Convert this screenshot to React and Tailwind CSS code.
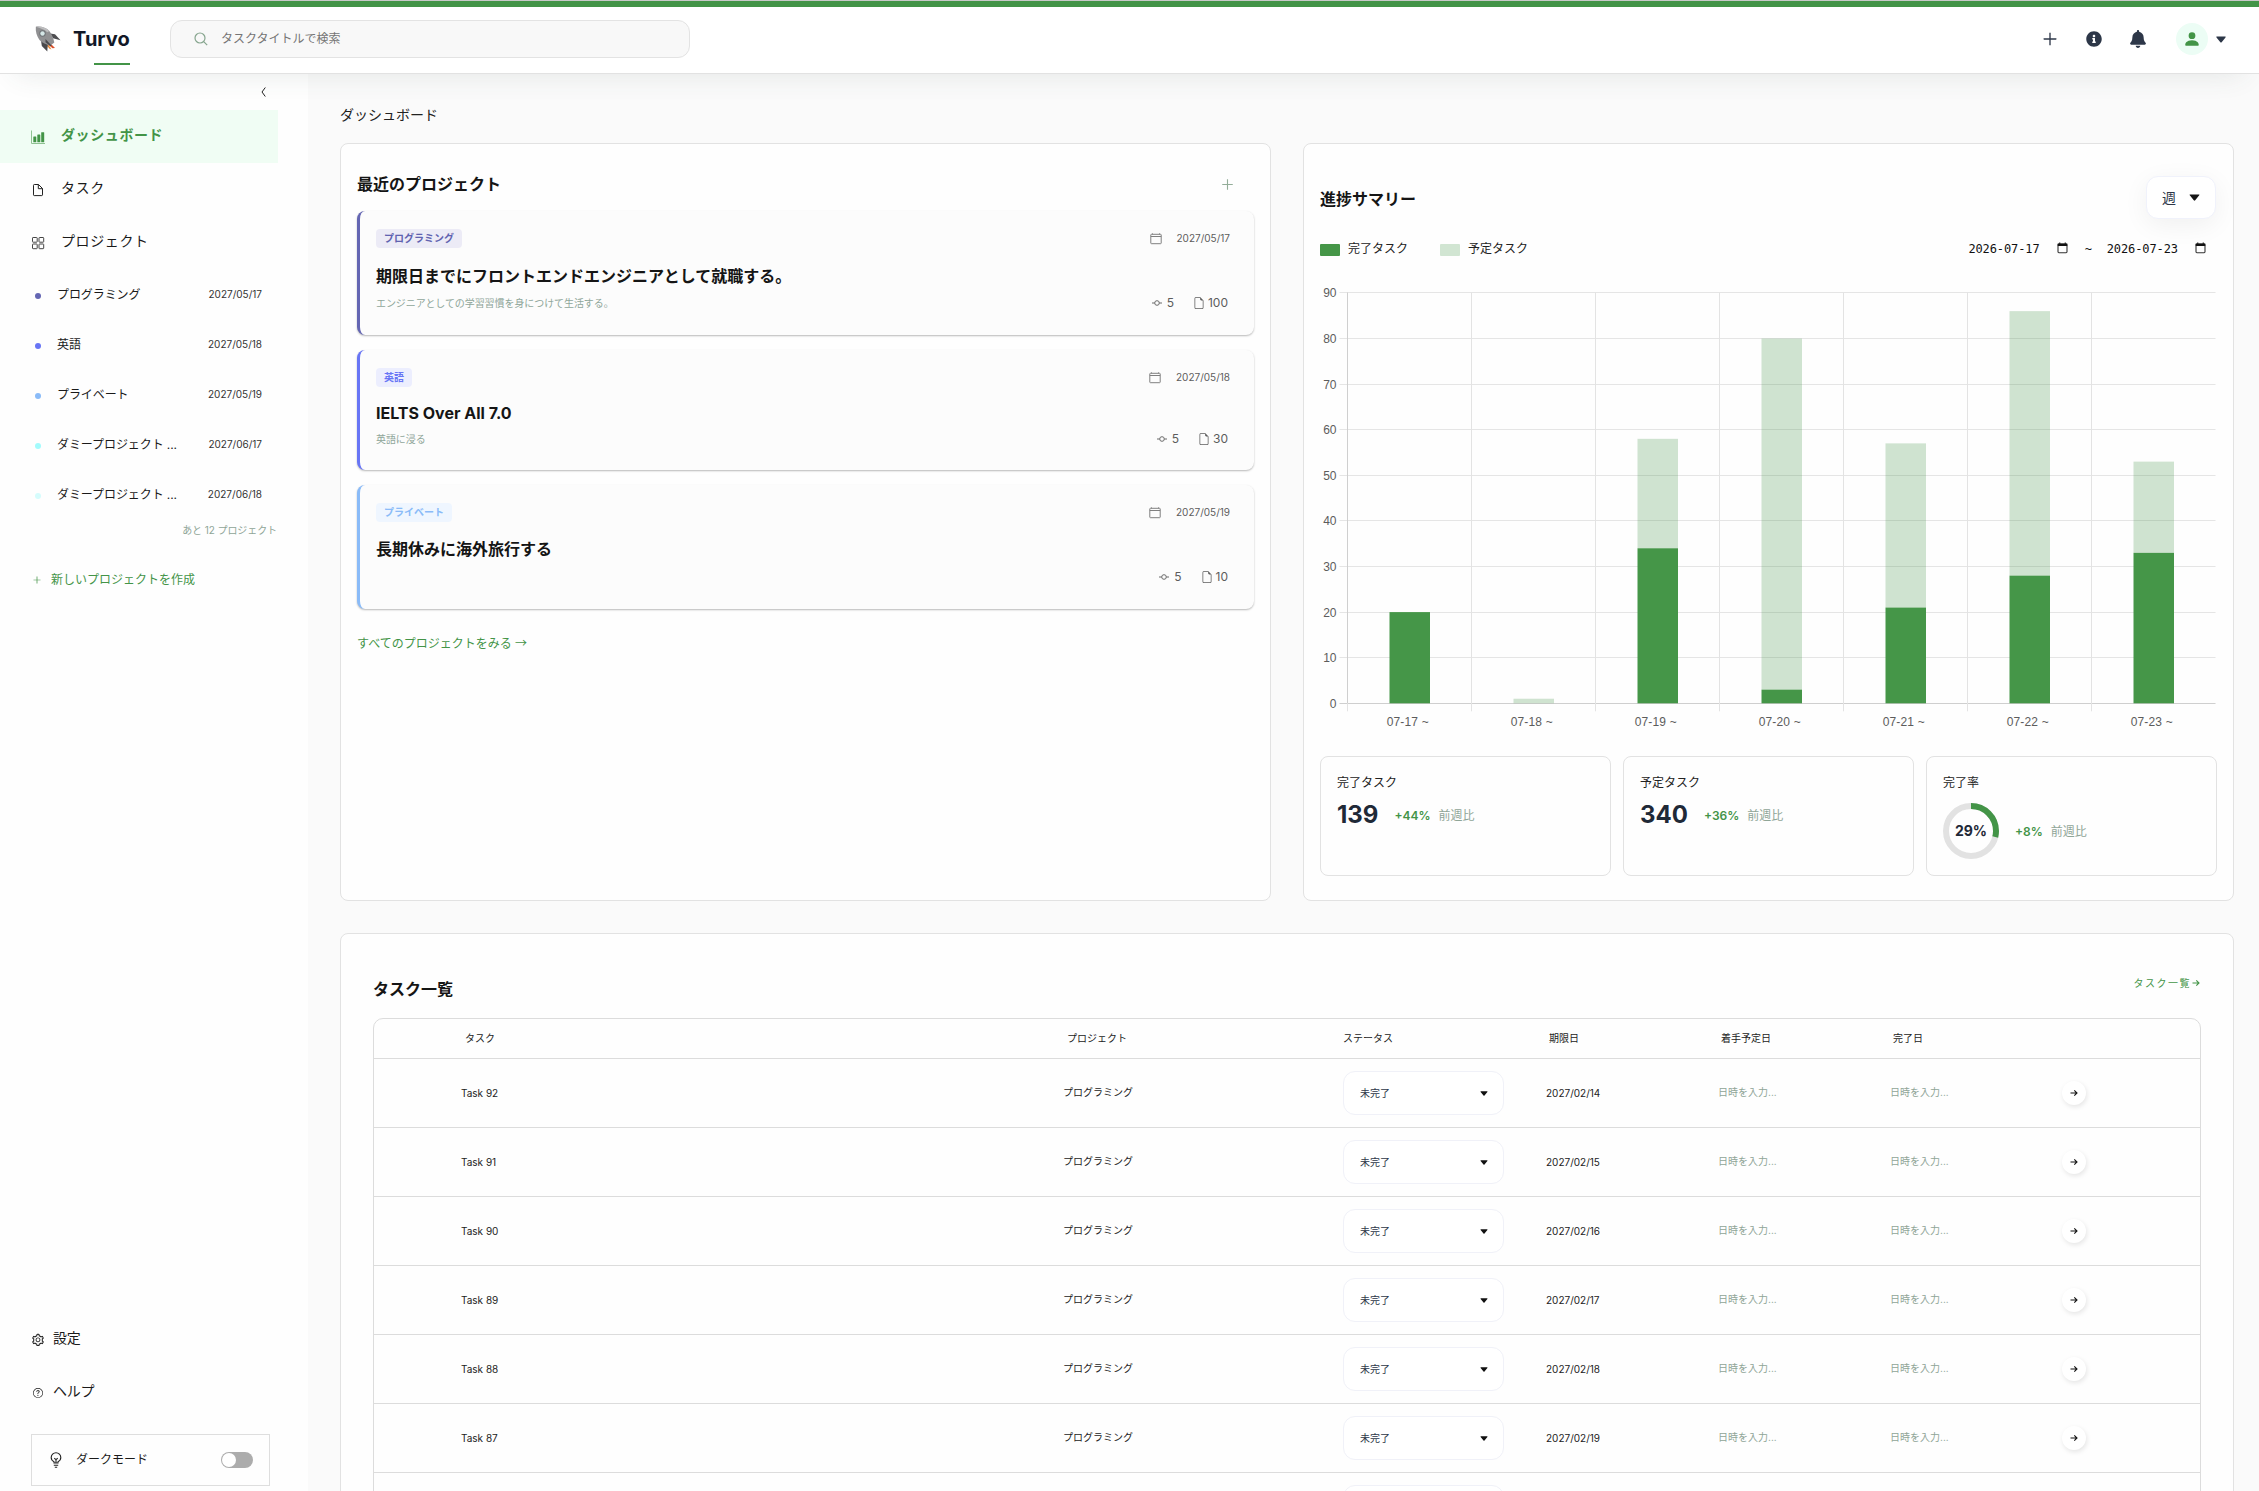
import React from "react";
import { AiOutlinePlus, AiOutlineSetting } from "react-icons/ai";
import { BsPersonFill, BsFileEarmark, BsQuestionCircle } from "react-icons/bs";
import { FaInfoCircle, FaBell } from "react-icons/fa";

function Caret({ className }) {
  return (
    <svg viewBox="0 0 12 8" className={className} fill="currentColor">
      <path d="M1 0.5h10c.6 0 .8.6.4 1L6.8 7.2c-.4.5-1.200.5-1.600 0L.6 1.500C.2 1.100.4.5 1 .5z" />
    </svg>
  );
}

function Rocket() {
  return (
    <svg viewBox="0 0 26 26" className="h-[26px] w-[26px]">
      <path d="M15 17l5 5-2.500.3-3.500-3z" fill="#d9532c" />
      <path d="M13 18l3.500 5.500-2-.8-2.500-3z" fill="#e98a3a" />
      <path d="M15 7.500l5 .8 5.500 6-7.500-2z" fill="#4d4d50" />
      <path d="M6 14l.8 6 5.500 5.500.5-7.500z" fill="#4a4a4d" />
      <path d="M.8.8c5-.8 10.500 1 13.500 4.200 2.500 3 4.200 7.500 5 11.500l-3.800 3c-4-.8-8.500-2.500-11-5.500C1.800 10.500.4 5.500.8.8z" fill="#909092" />
      <path d="M.8.8c5-.8 10.500 1 13.500 4.200l-2 1.200C9.500 3.500 5 2 .8 .8z" fill="#bdbdbf" />
      <circle cx="7.500" cy="7.500" r="3.200" fill="#6e7276" />
      <circle cx="7.500" cy="7.500" r="2.200" fill="#d5e6e6" />
      <path d="M10.500 13l6 6.500-1 .8-5-4z" fill="#4a4a4d" />
    </svg>
  );
}

function SearchIcon() {
  return (
    <svg viewBox="0 0 14 14" className="h-3.5 w-3.5" fill="none" stroke="#86a58e" strokeWidth="1.200">
      <circle cx="6" cy="6" r="5" />
      <path d="M9.700 9.700l3.500 3.500" />
    </svg>
  );
}

function ChartIcon() {
  return (
    <svg viewBox="0 0 14 14" className="mt-px h-[14px] w-[14px]">
      <path d="M.5 0.500v13h13.500" fill="none" stroke="#8fc292" strokeWidth="1" />
      <rect x="2.300" y="6.500" width="3" height="5.800" rx="0.400" fill="#439447" />
      <rect x="6.300" y="4.500" width="3" height="7.800" rx="0.400" fill="#439447" />
      <rect x="10.200" y="2.200" width="3" height="10.100" rx="0.400" fill="#439447" />
    </svg>
  );
}

function FileIcon() {
  return (
    <svg viewBox="0 0 14 14" className="mt-px h-3.5 w-3.5" fill="none" stroke="#222">
      <path d="M2.500 2.300c0-.5.3-.8.8-.8h4.200L11.500 5.500v6.400c0 .4-.3.700-.7.700H3.200c-.4 0-.7-.3-.7-.7z" />
      <path d="M7.300 1.500v4.200h4.200" />
    </svg>
  );
}

function GridIcon() {
  return (
    <svg viewBox="0 0 14 14" className="mt-px h-3.5 w-3.5" fill="none" stroke="#444">
      <rect x="1.500" y="1.500" width="4.700" height="4.700" rx="0.600" />
      <rect x="8" y="1.500" width="4.700" height="4.700" rx="0.600" />
      <rect x="1.500" y="8" width="4.700" height="4.700" rx="0.600" />
      <rect x="8" y="8" width="4.700" height="4.700" rx="0.600" />
    </svg>
  );
}

function BulbIcon() {
  return (
    <svg viewBox="0 0 12 16" className="h-4 w-3" fill="none" stroke="#222" strokeWidth="1.100">
      <path d="M4 11V9.800C2.300 9 1.200 7.500 1.200 5.600a4.800 4.800 0 0 1 9.600 0c0 1.900-1.100 3.400-2.800 4.200V11z" />
      <path d="M4.300 6.300L6 7.600l1.700-1.300M6 7.600V11M3.800 13.200h4.400M4.800 15.200h2.400" />
    </svg>
  );
}

function CommitIcon() {
  return (
    <svg viewBox="0 0 10 8" className="h-2 w-2.5" fill="none" stroke="#6b6b6b">
      <circle cx="5" cy="4" r="2.300" />
      <path d="M0 4h2.700M7.300 4H10" />
    </svg>
  );
}

function CalendarIcon() {
  return (
    <svg viewBox="0 0 12 12" className="h-3 w-3" fill="none" stroke="#808080">
      <rect x="0.800" y="1.300" width="10.400" height="9.400" rx="0.600" />
      <path d="M.8 3.500h10.400" />
      <path d="M2.500.4v1M9.500.4v1" />
    </svg>
  );
}

function DateInputIcon() {
  return (
    <svg viewBox="0 0 12 12" className="h-3 w-[11px]">
      <path d="M3 0v2M9 0v2" stroke="#111" strokeWidth="1.200" />
      <rect x="1.100" y="1.600" width="9.800" height="9.500" rx="1" fill="none" stroke="#333" strokeWidth="1.200" />
      <rect x="0.800" y="1.200" width="10.400" height="2.600" fill="#111" />
    </svg>
  );
}

function ArrowRight({ className }) {
  return (
    <svg viewBox="0 0 8 8" className={className} fill="none" stroke="currentColor" strokeWidth="1.100">
      <path d="M.5 4h6.500M4.300 1.300L7 4 4.300 6.700" />
    </svg>
  );
}

function Header() {
  return (
    <header className="relative z-10 shrink-0">
      <div className="h-px bg-[#c9c9c9]" />
      <div className="h-1.5 bg-[#439447]" />
      <div className="flex h-[67px] items-center border-b border-[#e2e2e2] bg-white pb-0.5 pl-[35px] pr-[33px] shadow-[0_16px_28px_-16px_rgba(60,80,75,0.12)]">
        <div className="relative flex items-center">
          <Rocket />
          <span className="ml-3 w-[57px] whitespace-nowrap text-[20px] font-bold leading-6 text-[#111827]">Turvo</span>
          <span className="absolute -bottom-[13px] right-0 h-0.5 w-9 bg-[#439447]" />
        </div>
        <div className="ml-10 flex h-[38px] w-[520px] items-center rounded-xl border border-[#e3e3e3] bg-[#f8f8f8] pl-[23px]">
          <SearchIcon />
          <span className="ml-[13px] text-xs text-[#757575]">タスクタイトルで検索</span>
        </div>
        <div className="ml-auto flex items-center text-[#2d3748]">
          <AiOutlinePlus className="h-[18px] w-[18px]" />
          <FaInfoCircle className="ml-[27px] h-4 w-4" />
          <FaBell className="ml-7 h-[18px] w-4" />
          <span className="ml-[30px] flex h-8 w-8 items-center justify-center rounded-full bg-[#ecfdf5]">
            <BsPersonFill className="h-[18px] w-[18px] text-[#439447]" />
          </span>
          <Caret className="ml-2 h-[7px] w-2.5" />
        </div>
      </div>
    </header>
  );
}

const sideProjects = [
  ["プログラミング", "2027/05/17", "bg-[#6466b3]"],
  ["英語", "2027/05/18", "bg-[#6875f5]"],
  ["プライベート", "2027/05/19", "bg-[#8abbf8]"],
  ["ダミープロジェクト ...", "2027/06/17", "bg-[#a3fbfc]"],
  ["ダミープロジェクト ...", "2027/06/18", "bg-[#d5fcfc]"],
];

function Sidebar() {
  return (
    <aside className="flex w-[308px] shrink-0 flex-col bg-[#fefefe] text-[#1a1a1a]">
      <div className="flex h-9 justify-end pr-[42px] pt-[13px]">
        <svg viewBox="0 0 5 10" className="h-2.5 w-[5px]" fill="none" stroke="#222">
          <path d="M4.300.5L1 5l3.300 4.500" />
        </svg>
      </div>
      <nav className="text-sm tracking-[0.600px]">
        <div className="flex h-[53px] w-[278px] items-center bg-[#f0fdf4] pl-[31px] font-bold text-[#439447]">
          <ChartIcon />
          <span className="-mt-[3px] ml-4">ダッシュボード</span>
        </div>
        <div className="flex h-[53px] items-center pl-[31px]">
          <FileIcon />
          <span className="-mt-[3px] ml-4">タスク</span>
        </div>
        <div className="flex h-[53px] items-center pl-[31px]">
          <GridIcon />
          <span className="-mt-[3px] ml-4">プロジェクト</span>
        </div>
      </nav>
      {sideProjects.map(([name, date, dot]) => (
        <div key={date} className="flex h-[50px] items-center pl-[35px] pr-[46px] pt-0.5 text-xs">
          <span className={`mt-0.5 h-1.5 w-1.5 rounded-full ${dot}`} />
          <span className="ml-4 tracking-[-0.080px]">{name}</span>
          <span className="ml-auto text-[10px] text-[#333]">{date}</span>
        </div>
      ))}
      <div className="flex h-[22px] items-center justify-end pr-[31px] pt-px text-[10px] tracking-[-0.080px] text-[#8fa597]">あと 12 プロジェクト</div>
      <div className="mt-[31px] flex h-4 items-center pl-8 text-xs text-[#439447]">
        <AiOutlinePlus className="h-2.5 w-2.5" />
        <span className="ml-[9px]">新しいプロジェクトを作成</span>
      </div>
      <div className="mt-auto text-sm">
        <div className="flex h-[53px] items-center pl-[31px]">
          <AiOutlineSetting className="mt-px h-3.5 w-3.5" />
          <span className="-mt-[3px] ml-2 tracking-[-0.200px]">設定</span>
        </div>
        <div className="flex h-[53px] items-center pl-[33px]">
          <BsQuestionCircle className="mt-px h-2.5 w-2.5" />
          <span className="-mt-[3px] ml-2.5 tracking-[-0.200px]">ヘルプ</span>
        </div>
      </div>
      <div className="mb-[5px] ml-[31px] mt-[15px] flex h-[52px] w-[239px] items-center border border-[#dedede] pl-[18px] pr-4 text-xs">
        <BulbIcon />
        <span className="ml-[14px]">ダークモード</span>
        <span className="ml-auto flex h-4 w-8 items-center rounded-full bg-[#acacac] pl-px">
          <span className="h-3.5 w-3.5 rounded-full bg-white" />
        </span>
      </div>
    </aside>
  );
}

const projects = [
  {
    tag: "プログラミング",
    title: "期限日までにフロントエンドエンジニアとして就職する。",
    desc: "エンジニアとしての学習習慣を身につけて生活する。",
    date: "2027/05/17",
    tasks: "100",
    box: "h-[124px] border-l-[#6466b3]",
    tagStyle: "bg-[#ecebf6] text-[#6062b0]",
    titleStyle: "mt-4",
    metaStyle: "mt-[5px]",
  },
  {
    tag: "英語",
    title: "IELTS Over All 7.0",
    desc: "英語に浸る",
    date: "2027/05/18",
    tasks: "30",
    box: "h-[120px] border-l-[#6875f5]",
    tagStyle: "bg-[#eceefe] text-[#6875f5]",
    titleStyle: "mt-3.5",
    metaStyle: "mt-1",
  },
  {
    tag: "プライベート",
    title: "長期休みに海外旅行する",
    desc: "",
    date: "2027/05/19",
    tasks: "10",
    box: "h-[124px] border-l-[#8abbf8]",
    tagStyle: "bg-[#eff6ff] text-[#8abbf8]",
    titleStyle: "mt-[15px]",
    metaStyle: "mt-1.5",
  },
];

function ProjectCard({ p }) {
  return (
    <article
      className={`flex flex-col rounded-lg border-l-[3px] bg-[#fcfcfc] pl-4 pr-6 pt-[18px] shadow-[0_1px_2px_rgba(0,0,0,0.28)] ${p.box}`}
    >
      <div className="flex h-[19px] items-center justify-between">
        <span className={`flex h-[19px] items-center rounded px-2 text-[10px] font-semibold ${p.tagStyle}`}>{p.tag}</span>
        <span className="flex items-center text-[10px] text-[#5c5c5c]">
          <CalendarIcon />
          <span className="ml-[15px]">{p.date}</span>
        </span>
      </div>
      <h3 className={`h-6 text-base font-bold leading-6 text-[#151515] ${p.titleStyle}`}>{p.title}</h3>
      <div className={`flex h-5 items-center justify-between ${p.metaStyle}`}>
        <p className="text-[10px] tracking-[-0.080px] text-[#8fa69a]">{p.desc}</p>
        <div className="flex items-center pr-0.5 text-xs text-[#5c5c5c]">
          <CommitIcon />
          <span className="ml-[5px]">5</span>
          <BsFileEarmark className="ml-[19px] h-3 w-3" />
          <span className="ml-[3px]">{p.tasks}</span>
        </div>
      </div>
    </article>
  );
}

function RecentProjects() {
  return (
    <section className="h-[758px] rounded-lg border border-[#e2e2e2] bg-[#fefefe] px-4 pt-7">
      <div className="flex h-6 items-center justify-between pr-[19px]">
        <h2 className="text-base font-bold leading-6 text-[#151515]">最近のプロジェクト</h2>
        <AiOutlinePlus className="h-[15px] w-[15px] text-[#93ad99]" />
      </div>
      <div className="mt-[15px] flex flex-col gap-[15px]">
        {projects.map((p) => (
          <ProjectCard key={p.tag} p={p} />
        ))}
      </div>
      <a className="mt-[25px] block text-xs leading-[18px] text-[#439447]">
        すべてのプロジェクトをみる <span className="font-['Noto_Sans_CJK_JP',sans-serif]">→</span>
      </a>
    </section>
  );
}

const days = [
  ["07-17 ~", 20, 20],
  ["07-18 ~", 0, 1],
  ["07-19 ~", 34, 58],
  ["07-20 ~", 3, 80],
  ["07-21 ~", 21, 57],
  ["07-22 ~", 28, 86],
  ["07-23 ~", 33, 53],
];

function BarChart() {
  const left = 27.5;
  const top = 10.5;
  const step = 124;
  const unit = 4.56;
  const base = top + 90 * unit + 0.4;
  return (
    <svg viewBox="0 0 897 452" className="h-[452px] w-[897px]" fontFamily='"Liberation Sans", Arial, sans-serif' fontSize="12">
      {[90, 80, 70, 60, 50, 40, 30, 20, 10, 0].map((v) => {
        const y = Math.floor(base - v * unit) + 0.5;
        return (
          <g key={v}>
            <path d={`M19.500 ${y}H895.500`} stroke={v === 0 ? "#cfcfcf" : "#e5e5e5"} />
            <text x="16.500" y={y + 4} textAnchor="end" fill="#5c5c5c">{v}</text>
          </g>
        );
      })}
      {days.map((d, i) => (
        <path key={d[0]} d={`M${left + i * step} ${top}V${base + 8}`} stroke="#e3e3e3" />
      ))}
      <path d={`M${left} ${top}V${base}`} stroke="#cfcfcf" />
      {days.map(([label, done, total], i) => {
        const cx = left + step * (i + 0.5);
        return (
          <g key={label}>
            <rect x={cx - 20} y={base - total * unit} width="40.500" height={(total - done) * unit} fill="#439447" fillOpacity="0.25" />
            <rect x={cx - 20} y={base - done * unit} width="40.500" height={done * unit} fill="#459648" />
            <text x={cx - 1.800} y={base + 23} textAnchor="middle" fill="#5c5c5c" textLength="42">{label}</text>
          </g>
        );
      })}
    </svg>
  );
}

function Stat({ label, children }) {
  return (
    <div className="h-[120px] rounded-lg border border-[#e2e2e2] bg-[#fefefe] pl-4 pt-[17px]">
      <div className="h-[18px] text-xs leading-[18px] text-[#222]">{label}</div>
      {children}
    </div>
  );
}

function Change({ value }) {
  return (
    <span className="ml-4 flex gap-2 pt-px text-xs">
      <b className="font-semibold text-[#439447]">{value}</b>
      <span className="text-[#8fa597]">前週比</span>
    </span>
  );
}

function Summary() {
  return (
    <section className="h-[758px] rounded-lg border border-[#e2e2e2] bg-[#fefefe] px-4 pt-8">
      <div className="flex h-[43px] items-center justify-between">
        <h2 className="pt-[3px] text-base font-bold leading-6 text-[#151515]">進捗サマリー</h2>
        <div className="mr-px flex h-[43px] w-[70px] items-center rounded-xl border border-[#f0f2fb] bg-white pl-[15px] text-sm text-[#2d3748] shadow-[0_6px_26px_rgba(0,0,0,0.06)]">
          週
          <Caret className="ml-[13px] h-[7px] w-[11px] text-[#151515]" />
        </div>
      </div>
      <div className="mt-5 flex h-5 items-center text-xs text-[#222]">
        <span className="mt-0.5 h-3 w-5 rounded-[1px] bg-[#459648]" />
        <span className="ml-2">完了タスク</span>
        <span className="ml-8 mt-0.5 h-3 w-5 rounded-[1px] bg-[#d1e5d2]" />
        <span className="ml-2">予定タスク</span>
        <div className="ml-auto flex items-center pr-[11px] font-[DejaVu_Sans_Mono,monospace] text-xs tracking-[-0.100px] text-[#111]">
          <span>2026-07-17</span>
          <span className="-mt-0.5 ml-[17px]"><DateInputIcon /></span>
          <span className="ml-[17px] mr-[15px]">~</span>
          <span>2026-07-23</span>
          <span className="-mt-0.5 ml-[17px]"><DateInputIcon /></span>
        </div>
      </div>
      <div className="mt-[23px]">
        <BarChart />
      </div>
      <div className="mt-[22px] grid grid-cols-3 gap-3">
        <Stat label="完了タスク">
          <div className="flex h-11 items-center pt-0.5">
            <b className="text-2xl font-bold leading-8 text-[#1f2937]">139</b>
            <Change value="+44%" />
          </div>
        </Stat>
        <Stat label="予定タスク">
          <div className="flex h-11 items-center pt-0.5">
            <b className="text-2xl font-bold leading-8 text-[#1f2937]">340</b>
            <Change value="+36%" />
          </div>
        </Stat>
        <Stat label="完了率">
          <div className="mt-[11px] flex h-14 items-center">
            <div className="relative flex h-14 w-14 items-center justify-center">
              <svg viewBox="0 0 56 56" className="absolute inset-0 h-14 w-14 -rotate-90" fill="none" strokeWidth="6">
                <circle cx="28" cy="28" r="25" stroke="#e2e2e2" />
                <circle cx="28" cy="28" r="25" stroke="#439447" pathLength="100" strokeDasharray="29 71" />
              </svg>
              <b className="relative text-sm font-bold text-[#1f2937]">29%</b>
            </div>
            <Change value="+8%" />
          </div>
        </Stat>
      </div>
    </section>
  );
}

const tasks = [
  ["Task 92", "2027/02/14"],
  ["Task 91", "2027/02/15"],
  ["Task 90", "2027/02/16"],
  ["Task 89", "2027/02/17"],
  ["Task 88", "2027/02/18"],
  ["Task 87", "2027/02/19"],
];

const columns = "grid grid-cols-[87px_602px_280px_203px_172px_172px_172px_1fr] items-center";

const selectBox = "flex h-11 w-[161px] items-center justify-between rounded-xl border border-[#f0f1f8] bg-white pl-4 pr-[15px] text-[#2d3748]";

function TaskTable() {
  return (
    <section className="mt-8 h-[760px] rounded-lg border border-[#e2e2e2] bg-[#fefefe] px-8 pt-10">
      <div className="flex h-8 justify-between">
        <h2 className="pt-[3px] text-base font-bold leading-6 text-[#151515]">タスク一覧</h2>
        <a className="flex h-[18px] items-center text-[10px] tracking-[1.500px] text-[#439447]">
          タスク一覧
          <ArrowRight className="ml-px mr-px h-2 w-2" />
        </a>
      </div>
      <div className="mt-3 rounded-t-[10px] border border-[#dcdcdc] text-[10px] text-[#222]">
        <div className={`h-[39px] ${columns}`}>
          <span />
          <span className="pl-1">タスク</span>
          <span className="pl-1">プロジェクト</span>
          <span>ステータス</span>
          <span className="pl-[3px]">期限日</span>
          <span className="pl-[3px]">着手予定日</span>
          <span className="pl-[3px]">完了日</span>
        </div>
        {tasks.map(([name, date]) => (
          <div key={name} className={`h-[69px] border-t border-[#dcdcdc] ${columns}`}>
            <span />
            <span>{name}</span>
            <span className="pb-0.5">プログラミング</span>
            <span className={selectBox}>
              未完了
              <Caret className="h-[5px] w-2 text-[#111]" />
            </span>
            <span>{date}</span>
            <span className="pb-0.5 text-[#8fa597]">日時を入力...</span>
            <span className="pb-0.5 text-[#8fa597]">日時を入力...</span>
            <span className="flex h-6 w-6 items-center justify-center rounded-full bg-white text-[#111] shadow-[1px_2px_5px_rgba(0,0,0,0.1)]">
              <ArrowRight className="h-2 w-2" />
            </span>
          </div>
        ))}
        <div className={`h-[69px] border-t border-[#dcdcdc] ${columns}`}>
          <span className="col-span-3" />
          <span className={selectBox} />
        </div>
      </div>
    </section>
  );
}

export default function App() {
  return (
    <div className="flex h-[1491px] w-[2259px] flex-col overflow-hidden bg-[#fafafa] font-[Inter,'Noto_Sans_CJK_JP',sans-serif]">
      <Header />
      <div className="flex min-h-0 flex-1">
        <Sidebar />
        <main className="min-w-0 flex-1 overflow-hidden pl-8 pr-[25px] pt-[31px]">
          <div className="h-5 text-sm leading-5 text-[#222]">ダッシュボード</div>
          <div className="mt-[18px] grid grid-cols-2 gap-8">
            <RecentProjects />
            <Summary />
          </div>
          <TaskTable />
        </main>
      </div>
    </div>
  );
}
